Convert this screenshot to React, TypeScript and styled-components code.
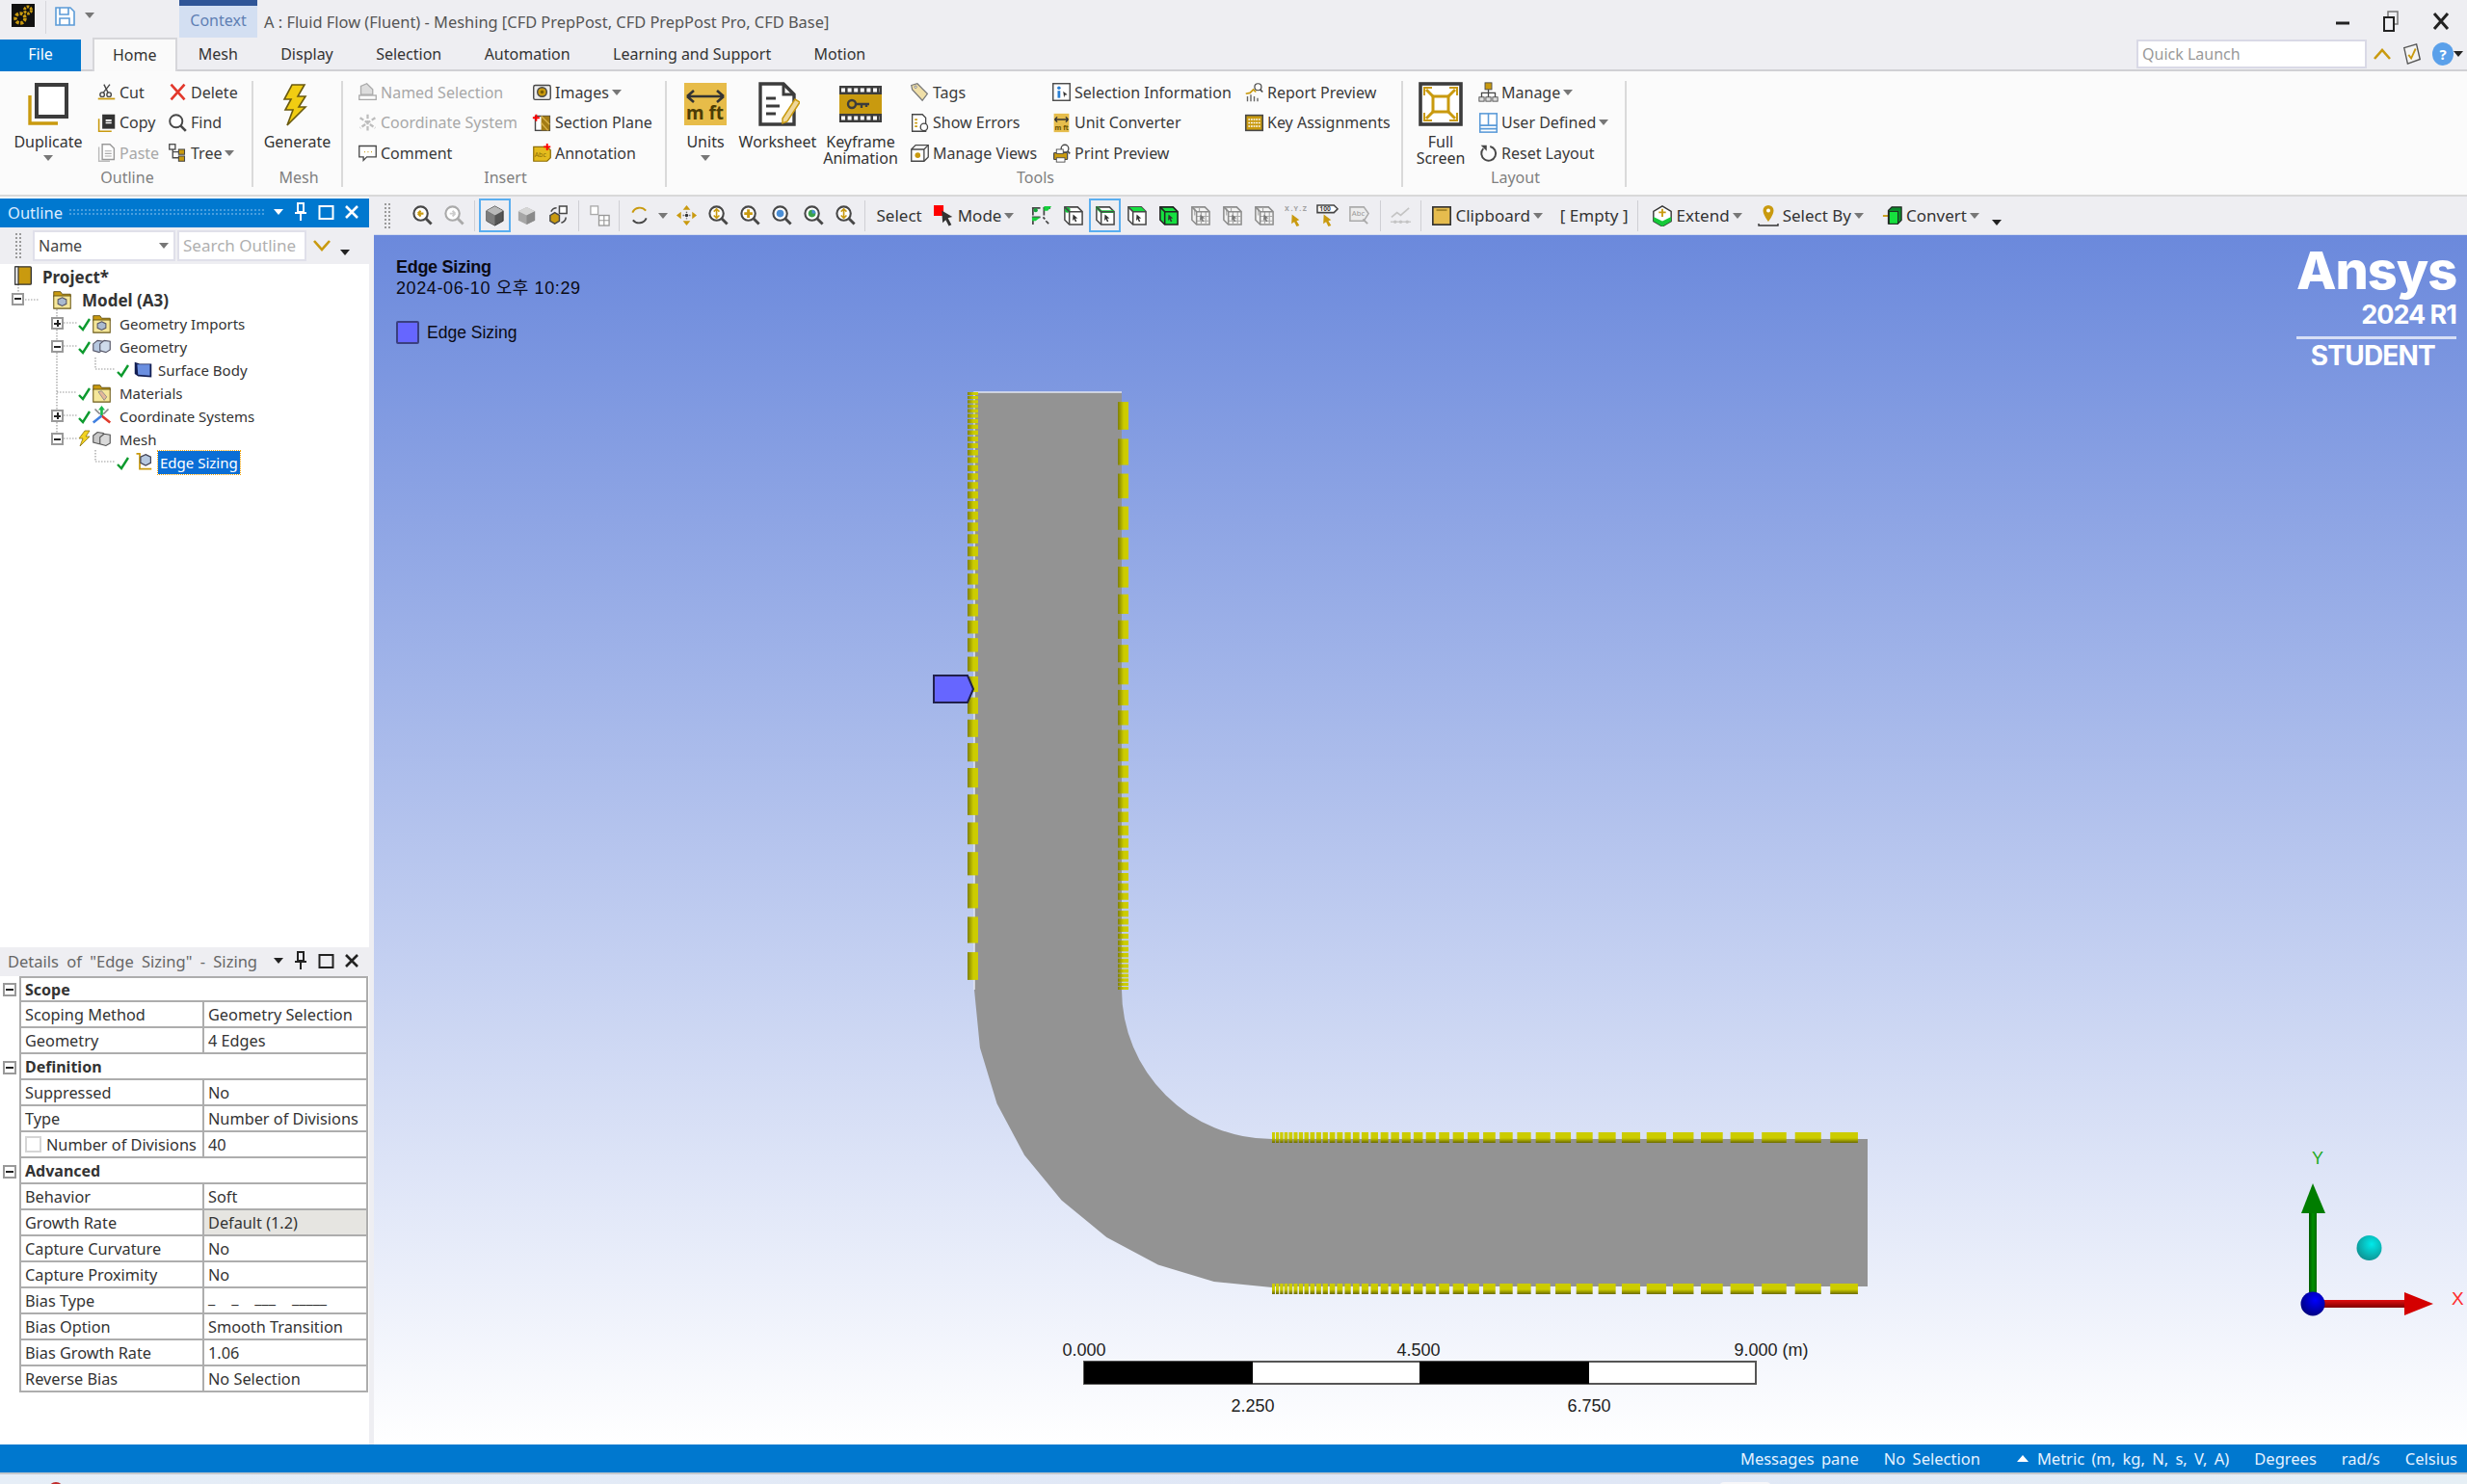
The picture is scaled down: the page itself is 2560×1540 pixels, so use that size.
import React from "react";
import styled, { createGlobalStyle } from "styled-components";

const GOLD = "#c99a0f";
const DARK = "#474747";
const BLUE = "#0078cf";
const FONT = `"Noto Sans", "Noto Sans CJK KR", sans-serif`;

const GlobalStyle = createGlobalStyle`
  html, body { margin: 0; padding: 0; background: #fff; overflow: hidden; }
  * { box-sizing: border-box; }
  body { font-family: ${FONT}; font-size: 16px; color: #333; }
`;

// ---- icons ----

const Svg = styled.svg<{ $size?: number }>`
  width: ${(p) => p.$size ?? 22}px;
  height: ${(p) => p.$size ?? 22}px;
  flex: none;
  display: block;
`;

const lens = (inner: React.ReactNode, stroke = DARK) => (
  <>
    <circle cx="10" cy="10" r="7.5" fill="#fff" stroke={stroke} strokeWidth="2.2" />
    <path d="M15.5 15.5 21.5 21.5" stroke={stroke} strokeWidth="3" />
    {inner}
  </>
);

const pickBox = (fill: string, stroke: string, extra?: React.ReactNode, arrow = "#333") => (
  <>
    <path d="M3 3H17L22 8V22H8L3 17Z" fill={fill} stroke={stroke} strokeWidth="1.6" />
    {extra}
    <path d="M8 8H22M8 8V22M8 8 3 3" fill="none" stroke={stroke} strokeWidth="1.6" />
    <path d="M12 11l5 4-2.500.5 1.500 3-1.500.5-1.500-3-1.500 2z" fill={arrow} />
  </>
);

const meshBox = (
  <>
    {pickBox(
      "#f2f2f2",
      "#8c8c8c",
      <path d="M13 8v14M18 8v14M8 13h14M8 18h14M6 3v9M11 3v5" stroke="#a8a8a8" strokeWidth="1.200" />,
      "#777",
    )}
  </>
);

const goldPointer = <path d="M8 11l8 6-3 1 3 5-3 1-2.500-5-3 2z" fill={GOLD} />;

const icons: Record<string, React.ReactNode> = {
  cut: (
    <>
      <path d="M2 20h20" stroke={GOLD} strokeWidth="2" />
      <circle cx="7" cy="15" r="2.6" fill="none" stroke={DARK} strokeWidth="1.6" />
      <circle cx="15" cy="15" r="2.6" fill="none" stroke={DARK} strokeWidth="1.6" />
      <path d="M8 13 16 3M14 13 9 3" stroke={DARK} strokeWidth="1.6" />
    </>
  ),
  delete: <path d="M4 3 20 21M20 3 4 21" stroke="#e2382c" strokeWidth="3" />,
  copy: (
    <>
      <path d="M3 7v15h15" fill="none" stroke={GOLD} strokeWidth="1.8" />
      <rect x="7" y="2" width="15" height="17" fill="#333" />
      <path d="M11 9h7M11 12h7" stroke="#fff" strokeWidth="1.8" />
    </>
  ),
  find: lens(null),
  paste: (
    <>
      <path d="M3 5v17h13" fill="none" stroke="#bbb" strokeWidth="1.6" />
      <path d="M7 2h9l5 5v13H7z" fill="#fff" stroke="#999" strokeWidth="1.6" />
      <path d="M10 10h8M10 13h8M10 16h8" stroke="#aaa" strokeWidth="1.4" />
    </>
  ),
  tree: (
    <>
      <path d="M6 7v11h8M6 11h8" fill="none" stroke={DARK} strokeWidth="1.5" />
      <rect x="2" y="2" width="7" height="6" fill="#fff" stroke={DARK} strokeWidth="1.5" />
      <rect x="13" y="8" width="7" height="6" fill={GOLD} stroke={DARK} strokeWidth="1.2" />
      <rect x="13" y="16" width="7" height="6" fill={GOLD} stroke={DARK} strokeWidth="1.2" />
    </>
  ),
  named: (
    <>
      <path d="M4 15V5l7-3 7 7v6z" fill="#ddd" stroke="#aaa" strokeWidth="1.5" />
      <rect x="2" y="16" width="20" height="5" fill="#fff" stroke="#aaa" strokeWidth="1.5" />
    </>
  ),
  coord: (
    <path d="M12 2v20M3 6l18 12M21 6 3 18" stroke="#bdbdbd" strokeWidth="2.6" strokeDasharray="5 2" />
  ),
  comment: (
    <>
      <path d="M2 4h20v13H11l-4 4v-4H2z" fill="#fff" stroke={DARK} strokeWidth="1.5" />
      <path d="M8 11h1M12 11h1M16 11h1" stroke={GOLD} strokeWidth="1.6" />
    </>
  ),
  images: (
    <>
      <rect x="2" y="4" width="20" height="17" rx="2" fill="#eee" stroke={DARK} strokeWidth="1.6" />
      <circle cx="12" cy="12" r="5.5" fill={GOLD} stroke={DARK} strokeWidth="1.6" />
      <circle cx="12" cy="12" r="2" fill="#7a5c00" />
    </>
  ),
  section: (
    <>
      <rect x="4" y="4" width="17" height="17" fill="#fff" stroke={DARK} strokeWidth="1.6" />
      <rect x="11" y="4" width="10" height="17" fill="#a47c14" />
      <path d="M11 4 21 14M11 12l8 9" stroke="#d9b44a" strokeWidth="1.5" />
      <path d="M1 6h8M5 2v8" stroke="#f00" strokeWidth="2.2" />
    </>
  ),
  annotation: (
    <>
      <path d="M2 5h16l4 4v9l-4 4H2z" fill="#e4bb1d" stroke="#8d6e08" strokeWidth="1.4" />
      <text x="3" y="17" fontSize="8" fill="#8d6e08" fontFamily={FONT}>
        Abc
      </text>
      <path d="M14 5h8M18 1v8" stroke="#f00" strokeWidth="2.2" />
    </>
  ),
  tags: (
    <>
      <path d="M2 4 9 2l12 12-6 8L3 9z" fill="#f0dfa8" stroke="#777" strokeWidth="1.4" />
      <circle cx="7" cy="6" r="1.4" fill="#fff" stroke="#777" />
    </>
  ),
  errors: (
    <>
      <path d="M3 2h12l4 4v16H3z" fill="#fff" stroke={DARK} strokeWidth="1.5" />
      <path d="M6 8h3M6 12h3M6 16h3" stroke={GOLD} strokeWidth="2" />
      <circle cx="17" cy="17" r="4.2" fill="#fff" stroke={DARK} strokeWidth="1.5" />
    </>
  ),
  views: (
    <>
      <path d="M2 8l5-5h15v14l-5 5H2z" fill="#fff" stroke={DARK} strokeWidth="1.5" />
      <path d="M2 8h15v14M17 8l5-5" fill="none" stroke={DARK} strokeWidth="1.5" />
      <circle cx="9.5" cy="15" r="3.2" fill={GOLD} />
    </>
  ),
  selinfo: (
    <>
      <rect x="2" y="2" width="20" height="20" fill="#fff" stroke={DARK} strokeWidth="1.6" />
      <circle cx="9" cy="7" r="2" fill="#2a7fd4" />
      <path d="M9 10.5V19" stroke="#2a7fd4" strokeWidth="3.2" />
      <path d="M14 11l5 4-3 .6-1 3z" fill="#333" />
    </>
  ),
  unitconv: (
    <>
      <rect x="3" y="1" width="18" height="22" fill="#e6bd4c" />
      <path d="M4 8h16M4 8l3-3M4 8l3 3M20 8l-3-3M20 8l-3 3" stroke="#333" strokeWidth="1.6" fill="none" />
      <text x="4" y="20" fontSize="8" fontWeight="700" fill="#6b5200" fontFamily={FONT}>
        m ft
      </text>
    </>
  ),
  print: (
    <>
      <circle cx="16" cy="7" r="4.4" fill="#fff" stroke={DARK} strokeWidth="1.5" />
      <path d="M19 10l3 3" stroke={DARK} strokeWidth="2" />
      <rect x="3" y="12" width="16" height="8" rx="1" fill={GOLD} stroke={DARK} strokeWidth="1.4" />
      <rect x="6" y="8" width="8" height="5" fill="#fff" stroke={DARK} />
      <rect x="6" y="18" width="10" height="5" fill="#fff" stroke={DARK} />
    </>
  ),
  report: (
    <>
      <circle cx="16.5" cy="6" r="4" fill="#fff" stroke={DARK} strokeWidth="1.4" />
      <path d="M19 9l3 3" stroke={DARK} strokeWidth="1.8" />
      <path d="M2 14l5-1 4-4 3 3" fill="none" stroke={GOLD} strokeWidth="2" />
      <path d="M4 17v6M8 15v8M12 17v6M16 19v4" stroke="#666" strokeWidth="1.6" />
    </>
  ),
  keys: (
    <>
      <rect x="2" y="3" width="20" height="18" fill={GOLD} stroke={DARK} strokeWidth="1.8" />
      <path d="M5 8h14M5 12h14M5 16h14" stroke="#fff" strokeWidth="1.8" strokeDasharray="2 1" />
    </>
  ),
  manage: (
    <>
      <rect x="8" y="1" width="8" height="8" fill={GOLD} stroke={DARK} />
      <path d="M12 9v4M4 19v-6h16v6M12 13v6" fill="none" stroke={DARK} strokeWidth="1.5" />
      <rect x="1" y="18" width="6" height="5" fill="#ddd" stroke={DARK} />
      <rect x="9" y="18" width="6" height="5" fill="#ddd" stroke={DARK} />
      <rect x="17" y="18" width="6" height="5" fill="#ddd" stroke={DARK} />
    </>
  ),
  userdef: (
    <>
      <rect x="2" y="1" width="20" height="22" fill="#fff" stroke="#5b9bd8" strokeWidth="1.8" />
      <path d="M2 15h20M2 19h20M12 1v14" stroke="#5b9bd8" strokeWidth="1.8" />
    </>
  ),
  reset: (
    <>
      <path d="M14 4.5a8.5 8.5 0 1 1-8 2.5" fill="none" stroke={DARK} strokeWidth="2.2" />
      <path d="M3 3h7v7z" fill={DARK} />
    </>
  ),
  duplicate: (
    <>
      <path d="M4 14v29h29" fill="none" stroke={GOLD} strokeWidth="3.4" />
      <rect x="11" y="3" width="31" height="33" fill="#fff" stroke="#3c3c3c" strokeWidth="4" />
    </>
  ),
  generate: (
    <path d="M17 3h13l-7 12h8L24 26h7L12 45l6-16h-8l6-11H9z" fill="#f1cd12" stroke="#6a5a10" strokeWidth="1.6" />
  ),
  units: (
    <>
      <rect x="1" y="1" width="44" height="44" fill="#e7bc49" />
      <path d="M4 15h38M4 15l7-6M4 15l7 6M42 15l-7-6M42 15l-7 6" fill="none" stroke="#333" strokeWidth="2.6" />
      <text x="3" y="39" fontSize="19" fontWeight="700" fill="#4d3d05" fontFamily={FONT}>
        m ft
      </text>
    </>
  ),
  worksheet: (
    <>
      <path d="M5 2h24l11 11v31H5z" fill="#fff" stroke="#3c3c3c" strokeWidth="3.4" />
      <path d="M29 2v11h11M11 17h10M11 25h14M11 33h10" fill="none" stroke="#3c3c3c" strokeWidth="3" />
      <path d="M41 18 46 21 33 41l-5 2 0-5z" fill="#efd89b" stroke={GOLD} strokeWidth="1.5" />
    </>
  ),
  keyframe: (
    <>
      <rect x="1" y="4" width="44" height="38" fill="#3c3c3c" />
      <rect x="1" y="13" width="44" height="20" fill={GOLD} />
      <path d="M3 8.5h40M3 37.5h40" stroke="#fff" strokeWidth="4" strokeDasharray="4 2.6" />
      <circle cx="14" cy="23" r="4" fill="none" stroke="#3c3c3c" strokeWidth="2.4" />
      <path d="M18 23h14M24 23v4M29 23v3" stroke="#3c3c3c" strokeWidth="2.4" />
    </>
  ),
  fullscreen: (
    <>
      <rect x="2" y="2" width="42" height="42" fill="#fff" stroke="#3c3c3c" strokeWidth="3.6" />
      <rect x="15" y="15" width="16" height="16" fill="none" stroke={GOLD} strokeWidth="3" />
      <path d="M15 15 8 8M31 15l7-7M15 31l-7 7M31 31l7 7" stroke={GOLD} strokeWidth="3" />
      <path d="M6 14V6h8M40 14V6h-8M6 32v8h8M40 32v8h-8" fill="none" stroke={GOLD} strokeWidth="2" />
    </>
  ),
  zoomBack: lens(<path d="M13 10H7M7 10l3-3M7 10l3 3" fill="none" stroke={GOLD} strokeWidth="2.2" />),
  zoomFwd: lens(<path d="M7 10h6M13 10l-3-3M13 10l-3 3" fill="none" stroke="#ccc" strokeWidth="2" />, "#aaa"),
  zoomFit: lens(<path d="M10 5v10M7 8l3-3 3 3M7 12l3 3 3-3" fill="none" stroke={GOLD} strokeWidth="1.7" />),
  zoomPlus: lens(<path d="M10 5.5v9M5.5 10h9" stroke={GOLD} strokeWidth="3" />),
  zoomBox: lens(<circle cx="10" cy="10" r="4" fill="#4a8ed6" />),
  zoomSel: lens(
    <>
      <circle cx="10" cy="10" r="4" fill="#3aa24a" />
      <path d="M10 6a4 4 0 0 1 4 4h-4z" fill="#4a8ed6" />
    </>,
  ),
  cubeShaded: (
    <>
      <path d="M12 2 21 7v11l-9 5-9-5V7z" fill="#555" stroke="#333" />
      <path d="M12 2 21 7l-9 5-9-5z" fill="#b9b9b9" />
      <path d="M12 12v11L3 18V7z" fill="#7d7d7d" />
    </>
  ),
  cubeFlat: (
    <>
      <path d="M12 3 21 7.5v10L12 22l-9-4.500v-10z" fill="#a6a6a6" />
      <path d="M12 3 21 7.5 12 12 3 7.500z" fill="#d6d6d6" />
      <path d="M12 12v10l9-4.500v-10z" fill="#8a8a8a" />
    </>
  ),
  viewCubes: (
    <>
      <path d="M13 2h8v8h-8z" fill="#fff" stroke={DARK} strokeWidth="1.6" />
      <path d="M3 12l5-3 5 3v6l-5 3-5-3z" fill={GOLD} stroke={DARK} strokeWidth="1.5" />
      <path d="M10 4C7 4 5 6 4 8M20 14c0 3-2 5-5 6" fill="none" stroke={DARK} strokeWidth="1.6" />
    </>
  ),
  viewports: (
    <>
      <rect x="2" y="2" width="8" height="9" fill="#fff" stroke="#aaa" strokeWidth="1.4" />
      <rect x="11" y="12" width="11" height="11" fill="#fff" stroke="#999" strokeWidth="1.4" />
      <path d="M16.500 12v11M11 17.500h11" stroke="#999" strokeWidth="1.2" />
    </>
  ),
  rotate: (
    <>
      <path d="M4.500 9A8.500 8.500 0 0 1 19 7" fill="none" stroke={GOLD} strokeWidth="2" />
      <path d="M19.500 15A8.500 8.500 0 0 1 5 17" fill="none" stroke={DARK} strokeWidth="2" />
    </>
  ),
  pan: (
    <>
      <path d="M12 1 8 6h8zM12 23l-4-5h8zM1 12l5-4v8zM23 12l-5-4v8z" fill={GOLD} />
      <circle cx="12" cy="12" r="1.800" fill="#333" />
      <path d="M12 8v1M12 15v1M8 12h1M15 12h1" stroke="#333" strokeWidth="1.400" />
    </>
  ),
  cursor: (
    <>
      <rect x="0" y="0" width="11" height="12" fill="#f00" />
      <path d="M9 6 21 13l-5 1.500L20 22l-3 1.500-3.500-7L10 20z" fill="#333" />
    </>
  ),
  edges: (
    <>
      <path d="M2 4h9M3 4v8M14 4h8M15 4v8M2 14h9M3 14v8M14 14l2 2M17 18l3 3" fill="none" stroke="#444" strokeWidth="1.800" />
      <path d="M15 2h8l-4 5h-4z" fill="#15d03c" />
      <path d="M2 14h9l-5 4H2z" fill="#15d03c" />
      <circle cx="6" cy="6.500" r="2.200" fill="#15a23a" />
    </>
  ),
  boxVertex: pickBox("#fff", DARK, <circle cx="6" cy="6" r="3" fill="#15c03c" />),
  boxEdge: pickBox("#fff", DARK, <path d="M3 3 8 8H22" fill="none" stroke="#15d03c" strokeWidth="3" />),
  boxFace: pickBox("#fff", DARK, <path d="M3 3H17L22 8H8z" fill="#15e040" />),
  boxSolid: pickBox("#15e040", "#222"),
  meshA: meshBox,
  xyz: (
    <>
      <text x="0" y="7" fontSize="7.500" fontWeight="700" fill="#a0a0a0" fontFamily={FONT} textLength="24">
        X.Y.Z
      </text>
      {goldPointer}
    </>
  ),
  tagHundred: (
    <>
      <path d="M1 1H19L23 5 19 9H1z" fill="#fff" stroke="#444" strokeWidth="1.600" />
      <text x="3.500" y="7.700" fontSize="7" fontWeight="700" fill="#444" fontFamily={FONT}>
        100
      </text>
      {goldPointer}
    </>
  ),
  abcTag: (
    <>
      <path d="M2 3H17L22 10 17 18H2z" fill="#ececec" stroke="#aaa" strokeWidth="1.600" />
      <text x="4" y="13" fontSize="8" fill="#999" fontFamily={FONT}>
        Abc
      </text>
      <path d="M16 16l5 5" stroke="#aaa" strokeWidth="2" />
    </>
  ),
  chartLine: (
    <>
      <path d="M1 19H23" stroke="#c4c4c4" strokeWidth="1.400" />
      <path d="M2 14l6-5 4 3 9-8" fill="none" stroke="#c4c4c4" strokeWidth="1.800" />
      <circle cx="6" cy="19" r="1.800" fill="#c4c4c4" />
      <circle cx="12" cy="19" r="1.800" fill="#c4c4c4" />
      <circle cx="19" cy="19" r="1.800" fill="#c4c4c4" />
    </>
  ),
  clipboard: (
    <>
      <rect x="2" y="2" width="20" height="20" fill="#e6bc4e" stroke="#333" strokeWidth="1.800" />
      <path d="M6 5.500H18" stroke="#8a6d18" strokeWidth="1.400" />
    </>
  ),
  extend: (
    <>
      <path d="M12 1 22 7v11l-10 6-10-6V7z" fill="#fff" stroke="#333" strokeWidth="1.500" />
      <path d="M2 13l10 5v6l-10-6z" fill="#16c93a" />
      <path d="M12 18l10-5v5l-10 6z" fill="#16c93a" />
      <path d="M12 4v9M8 8h8" stroke={GOLD} strokeWidth="2" />
    </>
  ),
  selectBy: (
    <>
      <path
        d="M12 1a5.500 5.500 0 0 1 5.500 5.500C17.500 11 12 18 12 18S6.500 11 6.500 6.500A5.500 5.500 0 0 1 12 1z"
        fill={GOLD}
      />
      <circle cx="12" cy="6.500" r="2" fill="#fff" />
      <path d="M2 20v2h20v-2" fill="none" stroke="#333" strokeWidth="1.400" />
    </>
  ),
  convert: (
    <>
      <path d="M1 12h6" stroke={GOLD} strokeWidth="2" />
      <path d="M7 6l4-4h11v15l-4 4H7z" fill="#0a8a2a" stroke="#222" strokeWidth="1.200" />
      <rect x="8" y="7" width="10" height="14" fill="#16e03e" stroke="#222" strokeWidth="1" />
    </>
  ),
  note: (
    <>
      <path d="M3 5 17 1l4 17-14 5z" fill="#f4f4f4" stroke="#555" strokeWidth="1.500" />
      <path d="M8 13l3 4 5-11" fill="none" stroke={GOLD} strokeWidth="2" />
    </>
  ),
  book: (
    <>
      <rect x="2" y="1" width="20" height="22" rx="1" fill={GOLD} stroke="#333" strokeWidth="1.600" />
      <rect x="2" y="1" width="4" height="22" fill="#f0f0f0" stroke="#333" strokeWidth="1.400" />
    </>
  ),
  folder: (
    <>
      <path d="M2 3h8l2 3h10v3H2z" fill={GOLD} stroke="#5a4a10" strokeWidth="1" />
      <path d="M2 8h20v15H2z" fill="#f5e79a" stroke="#6b5a18" strokeWidth="1.200" />
      <path d="M12 10l5 2.500v5L12 20l-5-2.500v-5z" fill="#a9bad0" stroke="#556" strokeWidth="1.200" />
    </>
  ),
  folderTag: (
    <>
      <path d="M2 3h8l2 3h10v3H2z" fill={GOLD} stroke="#5a4a10" strokeWidth="1" />
      <path d="M2 8h20v15H2z" fill="#f5e79a" stroke="#6b5a18" strokeWidth="1.200" />
      <path d="M8 11l4-1 6 7-3 4z" fill="#e4b89a" stroke="#888" />
    </>
  ),
  bodies: (
    <>
      <path d="M2 9l5-4 7 1v10l-5 3-7-2z" fill="#b7c9e0" stroke="#556" strokeWidth="1.300" />
      <path d="M10 9l5-4 7 1v10l-5 3-7-2z" fill="#cfdcec" stroke="#556" strokeWidth="1.300" />
    </>
  ),
  meshBodies: (
    <>
      <path d="M2 8l5-4 7 1v10l-5 3-7-2z" fill="#c9c9c9" stroke="#555" strokeWidth="1.300" />
      <path d="M10 10l5-4 7 1v10l-5 3-7-2z" fill="#dadada" stroke="#555" strokeWidth="1.300" />
    </>
  ),
  surface: (
    <>
      <path d="M2 3l6 2h14v16l-16-1-4-3z" fill="#111d52" />
      <path d="M5 6h15v13L6 18z" fill="#6b8fe0" />
    </>
  ),
  axes: (
    <>
      <path d="M12 12V2" stroke="#19b84a" strokeWidth="3" />
      <path d="M12 12 22 20" stroke="#e03a2a" strokeWidth="3" />
      <path d="M12 12 2 20" stroke="#3f7fe0" strokeWidth="3" />
      <path d="M4 4l6 6M20 4l-6 6" stroke="#888" strokeWidth="2" />
      <path d="M12 0l4 5H8z" fill="#19b84a" />
    </>
  ),
  sizing: (
    <>
      <path d="M4 2h4v18h14" fill="none" stroke={GOLD} strokeWidth="2" />
      <path d="M15 3l6 3v7l-6 3-6-3V6z" fill="#b7c9e0" stroke="#445" strokeWidth="1.400" />
    </>
  ),
};

const Icon = ({ name, size }: { name: string; size?: number }) => {
  const vb = size && size > 30 ? 46 : 24;
  return (
    <Svg $size={size} viewBox={`0 0 ${vb} ${vb}`}>
      {icons[name]}
    </Svg>
  );
};

const Caret = styled.i<{ $dark?: boolean }>`
  display: inline-block;
  flex: none;
  width: 0;
  height: 0;
  border-left: 5px solid transparent;
  border-right: 5px solid transparent;
  border-top: 6px solid ${(p) => (p.$dark ? "#222" : "#777")};
  margin-left: 3px;
`;

// ---- title bar ----

const Page = styled.div`
  width: 2560px;
  height: 1540px;
  display: flex;
  flex-direction: column;
  overflow: hidden;
`;

const TitleBar = styled.div`
  height: 39px;
  display: flex;
  background: #eeeef2;
`;

const AppLogo = styled.div`
  width: 24px;
  height: 24px;
  margin: 4px 11px 0 12px;
  background: #111;
  flex: none;
`;

const QuickSep = styled.div`
  width: 1px;
  height: 34px;
  margin-top: 1px;
  background: #d6d6dc;
`;

const SaveSlot = styled.div`
  margin: 7px 0 0 9px;
  display: flex;
  align-items: flex-start;
  width: 129px;
  & > i {
    margin: 6px 0 0 10px;
  }
`;

const ContextTab = styled.div`
  width: 81px;
  height: 39px;
  flex: none;
  background: #d3dff2;
  border-top: 6px solid #2f5597;
  color: #5f80b4;
  text-align: center;
  line-height: 30px;
`;

const WindowTitle = styled.div`
  flex: 1;
  margin-left: 7px;
  line-height: 46px;
  font-size: 16.400px;
  color: #555;
`;

const WindowButtons = styled.div`
  display: flex;
  align-items: center;
  gap: 35px;
  padding: 4px 18px 0 0;
`;

// ---- tabs ----

const TabBar = styled.div`
  height: 35px;
  display: flex;
  align-items: stretch;
  background: #eeeef2;
  border-bottom: 2px solid #d0d0d4;
`;

const FileTab = styled.div`
  width: 84px;
  height: 33px;
  margin: 2px 12px 0 0;
  background: ${BLUE};
  color: #fff;
  text-align: center;
  line-height: 31px;
`;

const Tab = styled.div<{ $active?: boolean }>`
  padding: 0 ${(p) => (p.$active ? 19 : 22.200)}px;
  height: ${(p) => (p.$active ? 35 : 33)}px;
  color: #333;
  background: ${(p) => (p.$active ? "#fafafa" : "transparent")};
  border: ${(p) => (p.$active ? "2px solid #d6d6da" : "0")};
  border-bottom: 0;
  line-height: ${(p) => (p.$active ? 33 : 35)}px;
  white-space: nowrap;
`;

const TabTools = styled.div`
  margin-left: auto;
  display: flex;
  align-items: center;
  gap: 10px;
  padding-right: 4px;
`;

const QuickLaunch = styled.div`
  width: 239px;
  height: 30px;
  background: #fff;
  border: 2px solid #d9d9e6;
  color: #999;
  font-size: 16px;
  line-height: 26px;
  padding-left: 4px;
  margin-right: -4px;
`;

const Chevron = styled.svg`
  width: 20px;
  height: 12px;
  flex: none;
`;

const HelpGroup = styled.div`
  display: flex;
  align-items: center;
  & > i {
    margin-left: 0;
  }
`;

const HelpBall = styled.div`
  width: 22px;
  height: 24px;
  border-radius: 50%;
  background: #5aa0ea;
  color: #fff;
  font-size: 15px;
  font-weight: 700;
  text-align: center;
  line-height: 24px;
`;

// ---- ribbon ----

const Ribbon = styled.div`
  height: 130px;
  padding-top: 10px;
  display: flex;
  background: #fbfbfb;
  border-bottom: 2px solid #d9d9d9;
`;

const Group = styled.div<{ $width: number }>`
  width: ${(p) => p.$width}px;
  height: 110px;
  flex: none;
  display: flex;
  flex-direction: column;
  border-right: 2px solid #dadada;
`;

const GroupBody = styled.div`
  height: 94px;
  margin-top: -4px;
  display: flex;
`;

const GroupLabel = styled.div`
  height: 20px;
  padding-left: 3px;
  line-height: 20px;
  text-align: center;
  color: #808080;
  font-size: 16px;
`;

const LargeButton = styled.div<{ $width: number }>`
  width: ${(p) => p.$width}px;
  flex: none;
  display: flex;
  flex-direction: column;
  align-items: center;
  padding-top: 5px;
  line-height: 17px;
  text-align: center;
  & > svg {
    margin-bottom: 8px;
  }
  & > i {
    margin: 5px 0 0;
  }
`;

const SmallColumn = styled.div<{ $width: number }>`
  width: ${(p) => p.$width}px;
  flex: none;
`;

const SmallButton = styled.div<{ $disabled?: boolean }>`
  height: 31.500px;
  display: flex;
  align-items: center;
  gap: 3px;
  white-space: nowrap;
  color: ${(p) => (p.$disabled ? "#a8a8a8" : "#3a3a3a")};
  & > i {
    margin-left: 0;
  }
`;

type Small = { icon: string; label: string; disabled?: boolean; caret?: boolean };

const SmallCol = ({ width, items }: { width: number; items: Small[] }) => (
  <SmallColumn $width={width}>
    {items.map((it) => (
      <SmallButton key={it.label} $disabled={it.disabled}>
        <Icon name={it.icon} size={21} />
        {it.label}
        {it.caret && <Caret />}
      </SmallButton>
    ))}
  </SmallColumn>
);

const RibbonBar = () => (
  <Ribbon>
    <Group $width={263}>
      <GroupBody>
        <LargeButton $width={100}>
          <Icon name="duplicate" size={46} />
          Duplicate
          <Caret />
        </LargeButton>
        <SmallCol
          width={74}
          items={[
            { icon: "cut", label: "Cut" },
            { icon: "copy", label: "Copy" },
            { icon: "paste", label: "Paste", disabled: true },
          ]}
        />
        <SmallCol
          width={87}
          items={[
            { icon: "delete", label: "Delete" },
            { icon: "find", label: "Find" },
            { icon: "tree", label: "Tree", caret: true },
          ]}
        />
      </GroupBody>
      <GroupLabel>Outline</GroupLabel>
    </Group>
    <Group $width={93}>
      <GroupBody>
        <LargeButton $width={91}>
          <Icon name="generate" size={46} />
          Generate
        </LargeButton>
      </GroupBody>
      <GroupLabel>Mesh</GroupLabel>
    </Group>
    <Group $width={336}>
      <GroupBody>
        <SmallColumn $width={15} />
        <SmallCol
          width={181}
          items={[
            { icon: "named", label: "Named Selection", disabled: true },
            { icon: "coord", label: "Coordinate System", disabled: true },
            { icon: "comment", label: "Comment" },
          ]}
        />
        <SmallCol
          width={138}
          items={[
            { icon: "images", label: "Images", caret: true },
            { icon: "section", label: "Section Plane" },
            { icon: "annotation", label: "Annotation" },
          ]}
        />
      </GroupBody>
      <GroupLabel>Insert</GroupLabel>
    </Group>
    <Group $width={764}>
      <GroupBody>
        <LargeButton $width={80}>
          <Icon name="units" size={46} />
          Units
          <Caret />
        </LargeButton>
        <LargeButton $width={70}>
          <Icon name="worksheet" size={46} />
          Worksheet
        </LargeButton>
        <LargeButton $width={102}>
          <Icon name="keyframe" size={46} />
          Keyframe
          <br />
          Animation
        </LargeButton>
        <SmallCol
          width={147}
          items={[
            { icon: "tags", label: "Tags" },
            { icon: "errors", label: "Show Errors" },
            { icon: "views", label: "Manage Views" },
          ]}
        />
        <SmallCol
          width={200}
          items={[
            { icon: "selinfo", label: "Selection Information" },
            { icon: "unitconv", label: "Unit Converter" },
            { icon: "print", label: "Print Preview" },
          ]}
        />
        <SmallCol
          width={160}
          items={[
            { icon: "report", label: "Report Preview" },
            { icon: "keys", label: "Key Assignments" },
          ]}
        />
      </GroupBody>
      <GroupLabel>Tools</GroupLabel>
    </Group>
    <Group $width={232}>
      <GroupBody>
        <LargeButton $width={78}>
          <Icon name="fullscreen" size={46} />
          Full
          <br />
          Screen
        </LargeButton>
        <SmallCol
          width={150}
          items={[
            { icon: "manage", label: "Manage", caret: true },
            { icon: "userdef", label: "User Defined", caret: true },
            { icon: "reset", label: "Reset Layout" },
          ]}
        />
      </GroupBody>
      <GroupLabel>Layout</GroupLabel>
    </Group>
  </Ribbon>
);

// ---- main area ----

const Main = styled.div`
  height: 1295px;
  display: flex;
  background: #f2f2f4;
`;

const LeftPane = styled.div`
  width: 383px;
  flex: none;
  display: flex;
  flex-direction: column;
  padding-top: 2px;
  background: #fff;
`;

const PaneGutter = styled.div`
  width: 5px;
  flex: none;
  background: #eeeef2;
`;

const RightPane = styled.div`
  flex: 1;
  display: flex;
  flex-direction: column;
  min-width: 0;
`;

const DockHeader = styled.div<{ $active?: boolean }>`
  height: 30px;
  flex: none;
  display: flex;
  align-items: center;
  padding: 0 10px 2px 8px;
  font-size: 16.500px;
  word-spacing: 4px;
  background: ${(p) => (p.$active ? BLUE : "#eeeef2")};
  color: ${(p) => (p.$active ? "#dcecff" : "#666")};
  white-space: nowrap;
`;

const DockGrip = styled.div`
  flex: 1;
  height: 8px;
  margin: 0 10px 0 6px;
  background-image: radial-gradient(currentColor 0.7px, transparent 0.8px);
  background-size: 4px 4px;
  opacity: 0.35;
`;

const DockButtons = styled.div`
  display: flex;
  align-items: center;
  gap: 10px;
  & > svg {
    width: 16px;
    height: 20px;
  }
`;

const DockIcons = ({ color }: { color: string }) => (
  <DockButtons>
    <Caret style={{ borderTopColor: color, margin: 0 }} />
    <svg viewBox="0 0 16 20">
      <path d="M5 1h6v9H5zM2 11h12M8 11v8" fill="none" stroke={color} strokeWidth="2" />
    </svg>
    <svg viewBox="0 0 16 20" style={{ width: 17 }}>
      <rect x="1" y="4" width="14" height="13" fill="none" stroke={color} strokeWidth="2" />
    </svg>
    <svg viewBox="0 0 16 20">
      <path d="M2 4 14 16M14 4 2 16" stroke={color} strokeWidth="2.600" />
    </svg>
  </DockButtons>
);

const OutlineTools = styled.div`
  height: 38px;
  flex: none;
  display: flex;
  align-items: center;
  background: #eeeef2;
  padding-left: 15px;
  gap: 2px;
`;

const ToolGrip = styled.div<{ $w?: number }>`
  width: ${(p) => p.$w ?? 8}px;
  height: 28px;
  flex: none;
  background-image: radial-gradient(#9a9a9a 0.8px, transparent 0.9px);
  background-size: 4px 4px;
`;

const NameSelect = styled.div`
  width: 148px;
  height: 32px;
  margin-left: 9px;
  background: #fff;
  border: 2px solid #e0e0ea;
  display: flex;
  align-items: center;
  justify-content: space-between;
  padding: 0 5px 0 4px;
  color: #444;
  font-size: 16px;
`;

const SearchBox = styled.div`
  width: 134px;
  height: 32px;
  background: #fff;
  border: 2px solid #e0e0ea;
  color: #b0b0b0;
  line-height: 28px;
  padding-left: 4px;
  font-size: 17px;
`;

const TreeArea = styled.div`
  position: relative;
  height: 709px;
  flex: none;
  background: #fff;
`;

const TreeLines = styled.svg`
  position: absolute;
  left: 0;
  top: 0;
  width: 200px;
  height: 240px;
  pointer-events: none;
`;

const LEVELS = ["0 0 44px", "54px 0 31px", "81px 14px 29px", "121px 17px 26px"];

const TreeRow = styled.div<{ $level: number }>`
  position: relative;
  height: 24px;
  display: grid;
  grid-template-columns: ${(p) => LEVELS[p.$level]} auto;
  justify-content: start;
  align-items: center;
  white-space: nowrap;
`;

const ExpanderSlot = styled.div<{ $left: number }>`
  padding-left: ${(p) => p.$left}px;
`;

const Expander = styled.div<{ $size?: number }>`
  width: ${(p) => p.$size ?? 13}px;
  height: ${(p) => p.$size ?? 13}px;
  background: #fff;
  border: 2px solid #999;
  position: relative;
  &::before {
    content: "";
    position: absolute;
    left: 1px;
    right: 1px;
    top: calc(50% - 1px);
    height: 2px;
    background: #222;
  }
`;

const ExpanderPlus = styled(Expander)`
  &::after {
    content: "";
    position: absolute;
    top: 1px;
    bottom: 1px;
    left: calc(50% - 1px);
    width: 2px;
    background: #222;
  }
`;

const CheckMark = styled.svg`
  width: 13px;
  height: 14px;
  margin-top: 8px;
`;

const Bolt = styled.svg`
  width: 13px;
  height: 18px;
  margin-top: 4px;
`;

const NodeLabel = styled.div<{ $bold?: boolean; $selected?: boolean }>`
  font-weight: ${(p) => (p.$bold ? 700 : 400)};
  font-size: ${(p) => (p.$bold ? 17 : 15)}px;
  color: ${(p) => (p.$selected ? "#fff" : "#333")};
  background: ${(p) => (p.$selected ? "#0a6ed6" : "transparent")};
  outline: ${(p) => (p.$selected ? "1px dotted #f0a000" : "0")};
  padding: ${(p) => (p.$selected ? "0 2px" : "0")};
  padding-top: ${(p) => (p.$bold ? 2 : 0)}px;
  height: 24px;
  line-height: 24px;
`;

const Check = () => (
  <CheckMark viewBox="0 0 13 14">
    <path d="M1 8l4 4 7-11" fill="none" stroke="#0d9a2e" strokeWidth="2.400" />
  </CheckMark>
);

type TreeNode = {
  level: number;
  left?: number;
  label: string;
  icon: string;
  bold?: boolean;
  expander?: "plus" | "minus";
  status?: "check" | "bolt";
  selected?: boolean;
};

const treeNodes: TreeNode[] = [
  { level: 0, left: 14, label: "Project*", icon: "book", bold: true },
  { level: 1, left: 12, label: "Model (A3)", icon: "folder", bold: true, expander: "minus" },
  { level: 2, left: 53, label: "Geometry Imports", icon: "folder", expander: "plus", status: "check" },
  { level: 2, left: 53, label: "Geometry", icon: "bodies", expander: "minus", status: "check" },
  { level: 3, label: "Surface Body", icon: "surface", status: "check" },
  { level: 2, label: "Materials", icon: "folderTag", status: "check" },
  { level: 2, left: 53, label: "Coordinate Systems", icon: "axes", expander: "plus", status: "check" },
  { level: 2, left: 53, label: "Mesh", icon: "meshBodies", expander: "minus", status: "bolt" },
  { level: 3, label: "Edge Sizing", icon: "sizing", status: "check", selected: true },
];

const OutlineTree = () => (
  <TreeArea>
    <TreeLines viewBox="0 0 200 240">
      <path
        d="M19 21V32M26 37H41M59 47V175M66 61H80M66 85H80M59 133H80M66 157H80M66 181H80M99 97V109H120M99 193V205H120"
        fill="none"
        stroke="#999"
        strokeWidth="1.200"
        strokeDasharray="1.500 1.500"
      />
    </TreeLines>
    {treeNodes.map((n) => (
      <TreeRow key={n.label} $level={n.level}>
        <ExpanderSlot $left={n.left ?? 0}>
          {n.expander === "plus" && <ExpanderPlus />}
          {n.expander === "minus" && <Expander />}
          {n.level === 0 && <Icon name={n.icon} size={20} />}
        </ExpanderSlot>
        <div>
          {n.status === "check" && <Check />}
          {n.status === "bolt" && (
            <Bolt viewBox="0 0 13 18">
              <path d="M7 1h5L8 7h4L2 17l3-8H1z" fill="#f3d320" stroke="#8a7410" strokeWidth="0.800" />
            </Bolt>
          )}
        </div>
        <div>{n.level > 0 && <Icon name={n.icon} size={21} />}</div>
        <NodeLabel $bold={n.bold} $selected={n.selected}>
          {n.label}
        </NodeLabel>
      </TreeRow>
    ))}
  </TreeArea>
);

// ---- details table ----

const DetailsArea = styled.div`
  flex: 1;
  background: #fff;
`;

const PropTable = styled.div`
  width: 382px;
`;

const PropRow = styled.div<{ $section?: boolean }>`
  height: 27px;
  display: grid;
  grid-template-columns: ${(p) => (p.$section ? "20px 1fr" : "20px 192px 1fr")};
  font-size: ${(p) => (p.$section ? 16 : 16.300)}px;
  color: #333;
  font-weight: ${(p) => (p.$section ? 700 : 400)};
`;

const Gutter = styled.div`
  display: flex;
  align-items: center;
  padding-left: 3px;
`;

const PropCell = styled.div<{ $value?: boolean; $shade?: boolean; $first?: boolean }>`
  border: 2px solid #adadad;
  border-width: ${(p) => (p.$first ? "2px" : "0 2px 2px 2px")};
  border-left-width: ${(p) => (p.$value ? 0 : 2)}px;
  height: 27px;
  padding-left: 4px;
  background: ${(p) => (p.$shade ? "#e6e5e1" : "#fff")};
  white-space: nowrap;
  display: flex;
  align-items: center;
`;

const CheckBox = styled.div`
  width: 17px;
  height: 17px;
  margin-right: 5px;
  border: 2px solid #d5d5d5;
  background: #fff;
`;

const BiasGlyphs = styled.span`
  white-space: pre;
  line-height: 20px;
  transform: translateY(-3px);
`;

type Prop = { name?: string; section?: string; value?: React.ReactNode; shade?: boolean; check?: boolean };

const props: Prop[] = [
  { section: "Scope" },
  { name: "Scoping Method", value: "Geometry Selection" },
  { name: "Geometry", value: "4 Edges" },
  { section: "Definition" },
  { name: "Suppressed", value: "No" },
  { name: "Type", value: "Number of Divisions" },
  { name: "Number of Divisions", value: "40", check: true },
  { section: "Advanced" },
  { name: "Behavior", value: "Soft" },
  { name: "Growth Rate", value: "Default (1.2)", shade: true },
  { name: "Capture Curvature", value: "No" },
  { name: "Capture Proximity", value: "No" },
  { name: "Bias Type", value: <BiasGlyphs>{"_    _    ___    _____"}</BiasGlyphs> },
  { name: "Bias Option", value: "Smooth Transition" },
  { name: "Bias Growth Rate", value: "1.06" },
  { name: "Reverse Bias", value: "No Selection" },
];

const DetailsTable = () => (
  <PropTable>
    {props.map((p, i) =>
      p.section ? (
        <PropRow key={p.section} $section>
          <Gutter>
            <Expander $size={14} />
          </Gutter>
          <PropCell $first={i === 0}>{p.section}</PropCell>
        </PropRow>
      ) : (
        <PropRow key={p.name}>
          <Gutter />
          <PropCell>
            {p.check && <CheckBox />}
            {p.name}
          </PropCell>
          <PropCell $value $shade={p.shade}>
            {p.value}
          </PropCell>
        </PropRow>
      ),
    )}
  </PropTable>
);

// ---- graphics toolbar ----

const Toolbar = styled.div`
  height: 40px;
  flex: none;
  display: flex;
  align-items: center;
  background: #eeeef2;
  border-bottom: 1px solid #d3dbee;
  white-space: nowrap;
  font-size: 17px;
`;

const ToolButton = styled.div<{ $on?: boolean }>`
  width: 33px;
  height: 35px;
  flex: none;
  display: flex;
  align-items: center;
  justify-content: center;
  border: 2px solid ${(p) => (p.$on ? "#5aaef0" : "transparent")};
`;

const ToolSep = styled.div<{ $w?: number; $blank?: boolean }>`
  width: ${(p) => p.$w ?? 8}px;
  height: 32px;
  flex: none;
  display: flex;
  justify-content: center;
  &::after {
    content: "";
    width: 1px;
    background: ${(p) => (p.$blank ? "transparent" : "#cfcfd4")};
  }
`;

const ToolText = styled.div<{ $ml?: number }>`
  display: flex;
  align-items: center;
  flex: none;
  color: #333;
  margin-left: ${(p) => p.$ml ?? 0}px;
  & > svg {
    margin-right: 3px;
  }
`;

const GraphicsToolbar = () => (
  <Toolbar>
    <ToolSep $w={10} $blank />
    <ToolGrip $w={8} />
    <ToolSep $w={15.500} $blank />
    <ToolButton><Icon name="zoomBack" size={23} /></ToolButton>
    <ToolButton><Icon name="zoomFwd" size={23} /></ToolButton>
    <ToolSep $w={9} />
    <ToolButton $on><Icon name="cubeShaded" size={23} /></ToolButton>
    <ToolButton><Icon name="cubeFlat" size={23} /></ToolButton>
    <ToolButton><Icon name="viewCubes" size={23} /></ToolButton>
    <ToolSep $w={10} />
    <ToolButton><Icon name="viewports" size={23} /></ToolButton>
    <ToolSep $w={8} />
    <ToolButton><Icon name="rotate" size={23} /></ToolButton>
    <Caret />
    <ToolSep $w={3} $blank />
    <ToolButton><Icon name="pan" size={23} /></ToolButton>
    <ToolButton><Icon name="zoomFit" size={23} /></ToolButton>
    <ToolButton><Icon name="zoomPlus" size={23} /></ToolButton>
    <ToolButton><Icon name="zoomBox" size={23} /></ToolButton>
    <ToolButton><Icon name="zoomSel" size={23} /></ToolButton>
    <ToolButton><Icon name="zoomFit" size={23} /></ToolButton>
    <ToolSep $w={8} />
    <ToolText $ml={8}>Select</ToolText>
    <ToolText $ml={12}>
      <Icon name="cursor" size={22} />
      Mode
      <Caret />
    </ToolText>
    <ToolSep $w={12} $blank />
    <ToolButton><Icon name="edges" size={23} /></ToolButton>
    <ToolButton><Icon name="boxVertex" size={23} /></ToolButton>
    <ToolButton $on><Icon name="boxEdge" size={23} /></ToolButton>
    <ToolButton><Icon name="boxFace" size={23} /></ToolButton>
    <ToolButton><Icon name="boxSolid" size={23} /></ToolButton>
    <ToolButton><Icon name="meshA" size={23} /></ToolButton>
    <ToolButton><Icon name="meshA" size={23} /></ToolButton>
    <ToolButton><Icon name="meshA" size={23} /></ToolButton>
    <ToolButton><Icon name="xyz" size={23} /></ToolButton>
    <ToolButton><Icon name="tagHundred" size={23} /></ToolButton>
    <ToolButton><Icon name="abcTag" size={23} /></ToolButton>
    <ToolSep $w={10} />
    <ToolButton><Icon name="chartLine" size={23} /></ToolButton>
    <ToolSep $w={8} />
    <ToolText $ml={7}>
      <Icon name="clipboard" size={22} />
      Clipboard
      <Caret />
    </ToolText>
    <ToolText $ml={18}>[ Empty ]</ToolText>
    <ToolSep $w={20} />
    <ToolText $ml={5}>
      <Icon name="extend" size={22} />
      Extend
      <Caret />
    </ToolText>
    <ToolText $ml={15}>
      <Icon name="selectBy" size={24} />
      Select By
      <Caret />
    </ToolText>
    <ToolText $ml={19}>
      <Icon name="convert" size={22} />
      Convert
      <Caret />
    </ToolText>
    <ToolText $ml={10}>
      <Caret $dark style={{ marginTop: 14 }} />
    </ToolText>
  </Toolbar>
);

// ---- viewport ----

const Viewport = styled.div`
  position: relative;
  flex: 1;
  padding: 22px 0 0 23px;
  background: linear-gradient(#6b89dc, #ffffff);
  font-family: "Liberation Sans", "Noto Sans CJK KR", sans-serif;
  overflow: hidden;
`;

const AnnoTitle = styled.div`
  position: relative;
  font-size: 18px;
  line-height: 22px;
  font-weight: 700;
  color: #0a0a14;
  letter-spacing: -0.3px;
`;

const AnnoDate = styled.div`
  position: relative;
  font-size: 18px;
  line-height: 22px;
  letter-spacing: 0.600px;
  color: #0a0a14;
`;

const Legend = styled.div`
  position: relative;
  display: flex;
  align-items: center;
  gap: 8px;
  margin-top: 23px;
  font-size: 17.500px;
  color: #0a0a14;
`;

const LegendSwatch = styled.div`
  width: 24px;
  height: 24px;
  background: #6666ff;
  border: 2px solid #3a3f80;
  border-radius: 2px;
`;

const ModelCanvas = styled.svg`
  position: absolute;
  left: 0;
  top: 0;
  width: 2172px;
  height: 1255px;
`;

const LogoBlock = styled.div`
  position: absolute;
  right: 11px;
  top: 4px;
  width: 166px;
  color: #fff;
  font-family: Inter, ${FONT};
  font-weight: 700;
  text-align: right;
`;

const LogoWord = styled.div`
  font-size: 54px;
  font-weight: 800;
  line-height: 66px;
  letter-spacing: -1px;
`;

const LogoVersion = styled.div`
  font-size: 27px;
  line-height: 28px;
  letter-spacing: -1px;
  margin-top: -1px;
`;

const LogoEdition = styled.div`
  border-top: 3px solid rgba(255, 255, 255, 0.7);
  margin-top: 8px;
  padding-right: 22px;
  font-size: 28px;
  line-height: 34px;
  letter-spacing: -0.800px;
`;

// edge sizing ticks: 40 divisions with a growth of 1.06
const biasTicks = (length: number, n = 40, r = 1.06) => {
  const a = (length * (r - 1)) / (Math.pow(r, n) - 1);
  const out: { start: number; size: number }[] = [];
  let pos = 0;
  for (let i = 0; i < n; i++) {
    const period = a * Math.pow(r, i);
    out.push({ start: pos, size: period * 0.74 });
    pos += period;
  }
  return out;
};

const outerArc = Array.from({ length: 9 }, (_, i) => {
  const t = (i / 8) * (Math.PI / 2);
  return `${1320 - 309 * Math.cos(t)} ${1027 + 309 * Math.sin(t)}`;
});

const ductPath = `M1011 407 H1164 V1027 A156 155 0 0 0 1320 1182 H1938 V1335 H1320 L${[...outerArc]
  .reverse()
  .join(" L")} Z`;

const vTicks = biasTicks(620);
const hTicks = biasTicks(618);

const ModelDrawing = () => (
  <ModelCanvas viewBox="388 244 2172 1255">
    <defs>
      <linearGradient id="tickH" x1="0" x2="1" y1="0" y2="0">
        <stop offset="0" stopColor="#7f7f00" />
        <stop offset="0.55" stopColor="#cccc00" />
      </linearGradient>
      <linearGradient id="tickV" x1="0" x2="0" y1="0" y2="1">
        <stop offset="0.55" stopColor="#cccc00" />
        <stop offset="1" stopColor="#6b6b00" />
      </linearGradient>
      <radialGradient id="ballBlue" cx="0.6" cy="0.35" r="0.7">
        <stop offset="0" stopColor="#0000ff" />
        <stop offset="1" stopColor="#00007a" />
      </radialGradient>
      <radialGradient id="ballCyan" cx="0.6" cy="0.35" r="0.75">
        <stop offset="0" stopColor="#00eaea" />
        <stop offset="1" stopColor="#108a8a" />
      </radialGradient>
      <linearGradient id="shaftY" x1="0" x2="1" y1="0" y2="0">
        <stop offset="0" stopColor="#005a00" />
        <stop offset="0.5" stopColor="#009000" />
        <stop offset="1" stopColor="#006a00" />
      </linearGradient>
      <linearGradient id="shaftX" x1="0" x2="0" y1="0" y2="1">
        <stop offset="0" stopColor="#e01010" />
        <stop offset="1" stopColor="#800000" />
      </linearGradient>
    </defs>

    <path d={ductPath} fill="#939393" />
    <path d="M1011 1027V407H1164" fill="none" stroke="#e4e8f2" strokeWidth="1.500" />

    {vTicks.map((t) => (
      <rect key={`l${t.start}`} x={1004} y={407 + t.start} width={11} height={t.size} fill="url(#tickH)" />
    ))}
    {vTicks.map((t) => (
      <rect key={`r${t.start}`} x={1160} y={1027 - t.start - t.size} width={11} height={t.size} fill="url(#tickH)" />
    ))}
    {hTicks.map((t) => (
      <rect key={`t${t.start}`} x={1320 + t.start} y={1175} width={t.size} height={11} fill="url(#tickV)" />
    ))}
    {hTicks.map((t) => (
      <rect key={`b${t.start}`} x={1320 + t.start} y={1332} width={t.size} height={11} fill="url(#tickV)" />
    ))}

    <path d="M969 701H1004L1010 715 1004 729H969Z" fill="#6666ff" stroke="#20204a" strokeWidth="2" />

    <rect x="1125" y="1413" width="697" height="23" fill="#fff" stroke="#555" strokeWidth="2" />
    <rect x="1125" y="1413" width="175" height="23" fill="#000" />
    <rect x="1473" y="1413" width="176" height="23" fill="#000" />
    <g fontSize="18" fill="#222" textAnchor="middle" fontFamily='"Liberation Sans", sans-serif'>
      <text x="1125" y="1407">0.000</text>
      <text x="1472" y="1407">4.500</text>
      <text x="1838" y="1407">9.000 (m)</text>
      <text x="1300" y="1465">2.250</text>
      <text x="1649" y="1465">6.750</text>
    </g>

    <text x="2399" y="1208" fontSize="18" fill="#22aa22" fontFamily='"Liberation Sans", sans-serif'>
      Y
    </text>
    <text x="2544" y="1354" fontSize="19" fill="#ff2a2a" fontFamily='"Liberation Sans", sans-serif'>
      X
    </text>
    <rect x="2396" y="1258" width="8" height="95" fill="url(#shaftY)" />
    <path d="M2400 1228 2413 1259H2388Z" fill="#007d00" />
    <rect x="2400" y="1349" width="96" height="8" fill="url(#shaftX)" />
    <path d="M2495 1341 2525 1353 2495 1365Z" fill="#d40000" />
    <circle cx="2400" cy="1353" r="12.500" fill="url(#ballBlue)" />
    <circle cx="2458.500" cy="1295" r="13" fill="url(#ballCyan)" />
  </ModelCanvas>
);

// ---- status bar ----

const StatusBar = styled.div`
  height: 29px;
  flex: none;
  display: flex;
  justify-content: flex-end;
  align-items: center;
  gap: 26px;
  padding-right: 10px;
  background: ${BLUE};
  color: #e6f2ff;
  font-size: 16.500px;
  word-spacing: 3px;
`;

const UnitsItem = styled.div`
  display: flex;
  align-items: center;
  gap: 9px;
  margin-left: 12px;
  &::before {
    content: "";
    border-left: 6px solid transparent;
    border-right: 6px solid transparent;
    border-bottom: 7px solid #fff;
  }
`;

const TaskStrip = styled.div`
  flex: 1;
  display: flex;
  padding: 8px 0 0 50px;
  overflow: hidden;
  border-top: 2px solid #c3c7cc;
  background: linear-gradient(90deg, #e6eef7, #dfe6f6 60%, #e6eff5);
`;

const TaskDot = styled.div`
  width: 16px;
  height: 16px;
  border-radius: 50%;
  background: #c02a2a;
`;

const TaskTab = styled.div`
  width: 54px;
  height: 16px;
  margin-left: 1718px;
  background: #f7f7f9;
  border-radius: 5px;
`;

const AppLogoGears = () => (
  <AppLogo>
    <svg viewBox="0 0 24 24" width="24" height="24">
      <circle cx="9" cy="15" r="5" fill="none" stroke={GOLD} strokeWidth="3.500" strokeDasharray="3 1.500" />
      <circle cx="17" cy="6.500" r="3.500" fill="none" stroke={GOLD} strokeWidth="3" strokeDasharray="2.500 1.200" />
    </svg>
  </AppLogo>
);

const App = () => (
  <Page>
    <GlobalStyle />
    <TitleBar>
      <AppLogoGears />
      <QuickSep />
      <SaveSlot>
        <svg width="21" height="20" viewBox="0 0 21 20">
          <path d="M1 1h15l4 4v14H1z" fill="#fff" stroke="#5b9bd8" strokeWidth="1.600" />
          <path d="M5 1v7h9V1M5 19v-7h10v7" fill="none" stroke="#5b9bd8" strokeWidth="1.600" />
        </svg>
        <Caret />
      </SaveSlot>
      <ContextTab>Context</ContextTab>
      <WindowTitle>A : Fluid Flow (Fluent) - Meshing [CFD PrepPost, CFD PrepPost Pro, CFD Base]</WindowTitle>
      <WindowButtons>
        <svg width="14" height="20" viewBox="0 0 14 20">
          <path d="M0 12h14" stroke="#222" strokeWidth="3" />
        </svg>
        <svg width="16" height="22" viewBox="0 0 16 22">
          <rect x="5" y="1" width="10" height="13" fill="none" stroke="#777" strokeWidth="1.500" />
          <rect x="1" y="7" width="10" height="14" fill="#eeeef2" stroke="#222" strokeWidth="2" />
        </svg>
        <svg width="18" height="20" viewBox="0 0 18 20">
          <path d="M2 2 16 18M16 2 2 18" stroke="#222" strokeWidth="3" />
        </svg>
      </WindowButtons>
    </TitleBar>

    <TabBar>
      <FileTab>File</FileTab>
      <Tab $active>Home</Tab>
      <Tab>Mesh</Tab>
      <Tab>Display</Tab>
      <Tab>Selection</Tab>
      <Tab>Automation</Tab>
      <Tab>Learning and Support</Tab>
      <Tab>Motion</Tab>
      <TabTools>
        <QuickLaunch>Quick Launch</QuickLaunch>
        <Chevron viewBox="0 0 20 12">
          <path d="M2 11 10 2l8 9" fill="none" stroke={GOLD} strokeWidth="2.600" />
        </Chevron>
        <Icon name="note" size={22} />
        <HelpGroup>
          <HelpBall>?</HelpBall>
          <Caret $dark />
        </HelpGroup>
      </TabTools>
    </TabBar>

    <RibbonBar />

    <Main>
      <LeftPane>
        <DockHeader $active>
          Outline
          <DockGrip />
          <DockIcons color="#fff" />
        </DockHeader>
        <OutlineTools>
          <ToolGrip />
          <NameSelect>
            Name
            <Caret />
          </NameSelect>
          <SearchBox>Search Outline</SearchBox>
          <Chevron viewBox="0 0 20 12" style={{ marginLeft: 4 }}>
            <path d="M2 1l8 9 8-9" fill="none" stroke={GOLD} strokeWidth="2.600" />
          </Chevron>
          <Caret $dark style={{ marginTop: 14, marginLeft: 7 }} />
        </OutlineTools>
        <OutlineTree />
        <DockHeader>
          Details of "Edge Sizing" - Sizing
          <DockGrip />
          <DockIcons color="#222" />
        </DockHeader>
        <DetailsArea>
          <DetailsTable />
        </DetailsArea>
      </LeftPane>
      <PaneGutter />
      <RightPane>
        <GraphicsToolbar />
        <Viewport>
          <ModelDrawing />
          <AnnoTitle>Edge Sizing</AnnoTitle>
          <AnnoDate>2024-06-10 오후 10:29</AnnoDate>
          <Legend>
            <LegendSwatch />
            Edge Sizing
          </Legend>
          <LogoBlock>
            <LogoWord>Ansys</LogoWord>
            <LogoVersion>2024 R1</LogoVersion>
            <LogoEdition>STUDENT</LogoEdition>
          </LogoBlock>
        </Viewport>
      </RightPane>
    </Main>

    <StatusBar>
      <div>Messages pane</div>
      <div>No Selection</div>
      <UnitsItem>Metric (m, kg, N, s, V, A)</UnitsItem>
      <div>Degrees</div>
      <div>rad/s</div>
      <div>Celsius</div>
    </StatusBar>
    <TaskStrip>
      <TaskDot />
      <TaskTab />
    </TaskStrip>
  </Page>
);

export default App;
